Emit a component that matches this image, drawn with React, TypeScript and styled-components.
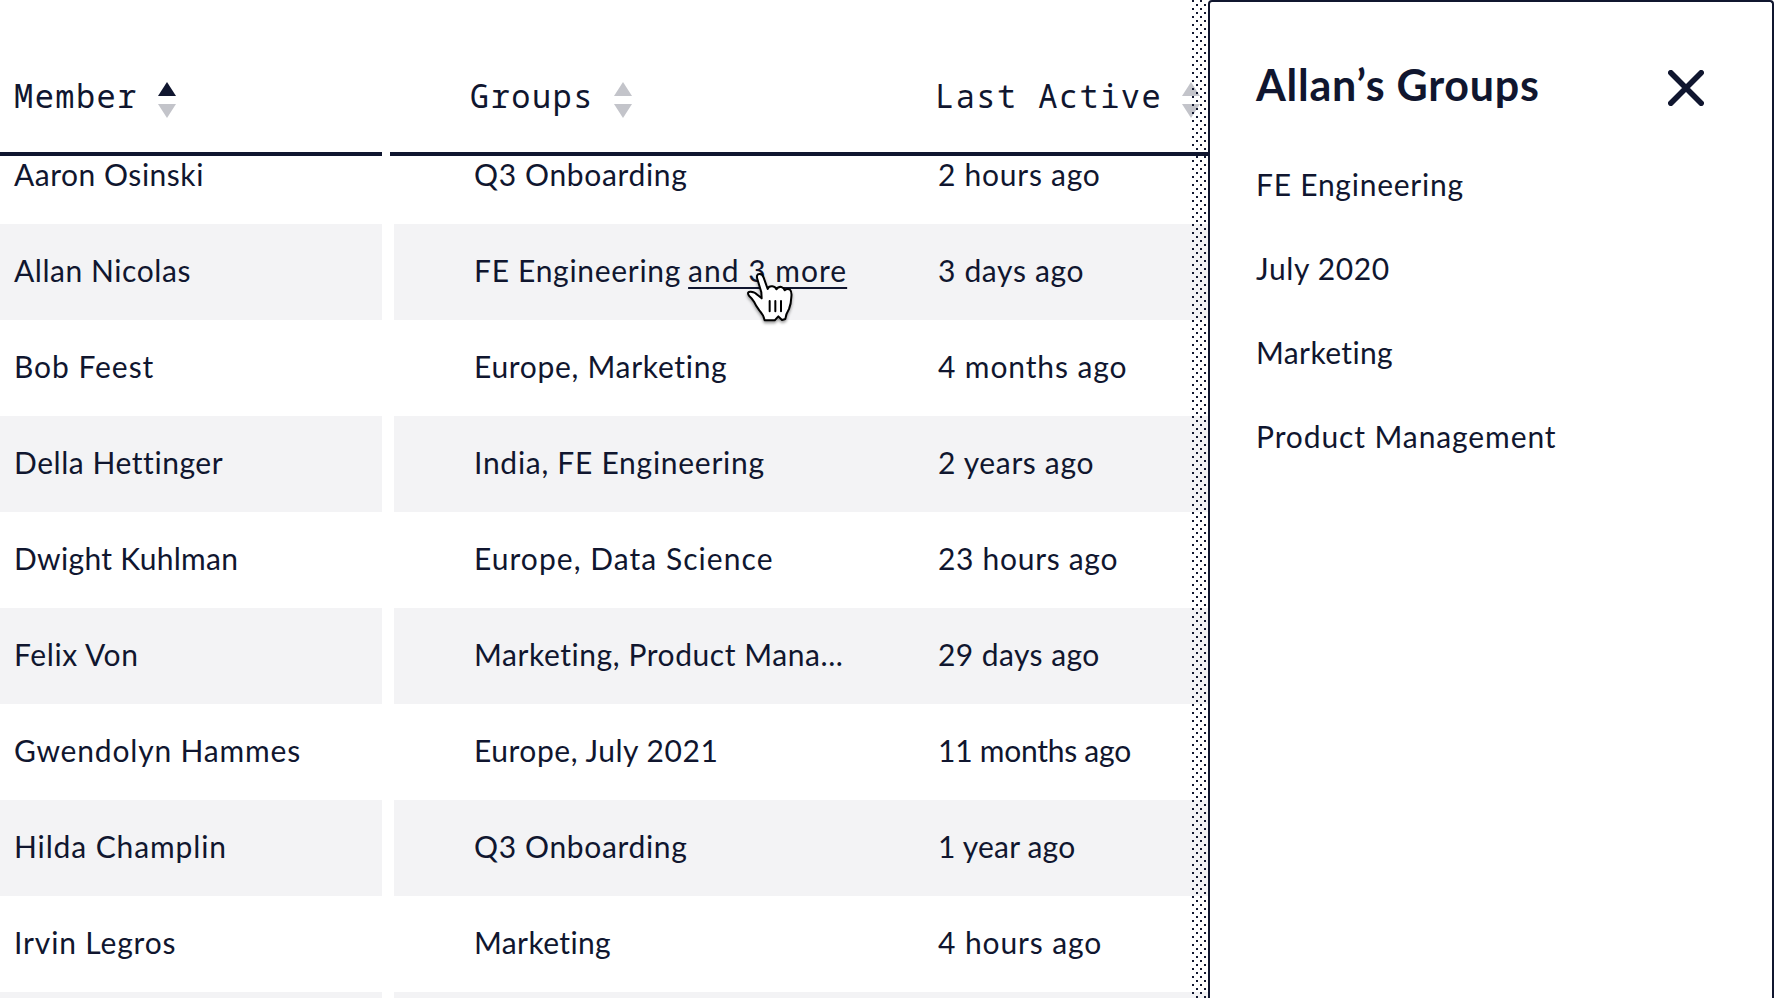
import React from 'react';
import styled, {createGlobalStyle} from 'styled-components';

const navy = '#10162f';
const muted = '#c3c4ca';
const stripe = '#f3f3f5';

const GlobalStyle = createGlobalStyle`
    * {
        box-sizing: border-box;
    }

    body {
        margin: 0;
        background: #fff;
        color: ${navy};
        font-family: Lato, 'Liberation Sans', sans-serif;
        font-size: 30px;
        overflow: hidden;
    }
`;

const Page = styled.div`
    display: flex;
    width: 100vw;
    height: 100vh;
    overflow: hidden;
`;

const TableArea = styled.main`
    position: relative;
    display: flex;
    flex-direction: column;
    flex: 0 0 1208px;
    overflow: hidden;
`;

const HeaderRow = styled.div`
    display: grid;
    grid-template-columns: 382px 818px;
    column-gap: 8px;
    flex: 0 0 156px;
`;

const HeaderGroup = styled.div<{ $columns?: string; $indent: number }>`
    display: grid;
    grid-template-columns: ${({ $columns }) => $columns || '1fr'};
    align-items: start;
    padding: 75px 0 0 ${({ $indent }) => $indent}px;
    border-bottom: 4px solid ${navy};
`;

const HeaderButton = styled.button`
    display: flex;
    align-items: flex-start;
    padding: 0;
    border: 0;
    background: none;
    color: inherit;
    font: 32px/42px 'Noto Sans Mono', 'Roboto Mono', 'Liberation Mono', monospace;
    letter-spacing: 1.45px;
    white-space: nowrap;
    cursor: pointer;
`;

const SortArrows = styled.svg`
    flex: none;
    width: 18px;
    height: 36px;
    margin: 7px 0 0 20px;
`;

const Body = styled.div`
    flex: 1;
    overflow: hidden;
`;

// rows are scrolled a little way under the header
const Rows = styled.div`
    margin-top: -28px;
`;

const Row = styled.div`
    display: grid;
    grid-template-columns: 382px 814px;
    column-gap: 12px;
    height: 96px;
`;

const CellGroup = styled.div<{ $striped: boolean; $columns?: string; $indent: number }>`
    display: grid;
    grid-template-columns: ${({ $columns }) => $columns || '1fr'};
    padding: 0 0 3px ${({ $indent }) => $indent}px;
    background: ${({ $striped }) => ($striped ? stripe : '#fff')};
    line-height: 93px;
    white-space: nowrap;
`;

const Label = styled.span<{ $tracking: number }>`
    letter-spacing: ${({ $tracking }) => $tracking}px;
`;

const MoreLink = styled.a`
    margin-left: 7px;
    letter-spacing: 1px;
    text-decoration: underline 2px;
    text-decoration-skip-ink: none;
    text-underline-offset: 5px;
    cursor: pointer;
`;

const DotShadow = styled.div`
    position: absolute;
    top: 0;
    right: 0;
    bottom: 0;
    width: 16px;
    background-image:
        conic-gradient(from 270deg at 2px 2px, ${navy} 90deg, transparent 0),
        conic-gradient(from 270deg at 2px 2px, ${navy} 90deg, transparent 0);
    background-size: 8px 8px;
    background-position: 0 0, 4px 4px;
`;

const Flyout = styled.aside`
    flex: 1;
    padding: 60px 68px 0 46px;
    border: 2px solid ${navy};
    border-bottom: 0;
    border-radius: 4px 4px 0 0;
    background: #fff;
`;

const FlyoutHeader = styled.header`
    display: flex;
    justify-content: space-between;
    align-items: flex-start;
    height: 82px;
`;

const Title = styled.h2`
    margin: 0;
    font-size: 43px;
    line-height: 46px;
    letter-spacing: 0.75px;
`;

const CloseButton = styled.button`
    display: flex;
    margin: 8px 0 0;
    padding: 0;
    border: 0;
    background: none;
    color: inherit;
    cursor: pointer;
`;

const GroupList = styled.ul`
    margin: 0;
    padding: 0;
    list-style: none;
`;

const GroupItem = styled.li`
    height: 84px;
    line-height: 80px;
`;

const Pointer = styled.svg`
    position: absolute;
    left: 744px;
    top: 269px;
    width: 52px;
    height: 56px;
    filter: drop-shadow(0 2px 1.5px rgba(0, 0, 0, 0.4));
    pointer-events: none;
`;

interface IText {
    text: string;
    tracking: number;
}

interface IMember {
    name: IText;
    groups: IText;
    more?: string;
    lastActive: IText;
}

const t = (text: string, tracking: number): IText => ({ text, tracking });

const members: IMember[] = [
    { name: t('Aaron Osinski', 0.52), groups: t('Q3 Onboarding', 0.65), lastActive: t('2 hours ago', 0.75) },
    { name: t('Allan Nicolas', 0.56), groups: t('FE Engineering', 0.7), more: 'and 3 more', lastActive: t('3 days ago', 0.66) },
    { name: t('Bob Feest', 0.95), groups: t('Europe, Marketing', 0.7), lastActive: t('4 months ago', 0.88) },
    { name: t('Della Hettinger', 0.55), groups: t('India, FE Engineering', 0.72), lastActive: t('2 years ago', 0.65) },
    { name: t('Dwight Kuhlman', 0.3), groups: t('Europe, Data Science', 1.05), lastActive: t('23 hours ago', 0.7) },
    { name: t('Felix Von', 0.6), groups: t('Marketing, Product Mana...', 0.57), lastActive: t('29 days ago', 0.43) },
    { name: t('Gwendolyn Hammes', 0.82), groups: t('Europe, July 2021', 0.55), lastActive: t('11 months ago', -0.25) },
    { name: t('Hilda Champlin', 0.88), groups: t('Q3 Onboarding', 0.65), lastActive: t('1 year ago', 0.2) },
    { name: t('Irvin Legros', 0.85), groups: t('Marketing', 0.38), lastActive: t('4 hours ago', 0.9) },
    { name: t('', 0), groups: t('', 0), lastActive: t('', 0) },
];

const allanGroups: IText[] = [
    t('FE Engineering', 0.75),
    t('July 2020', 0.65),
    t('Marketing', 0.38),
    t('Product Management', 0.9),
];

const SortHeader: React.FC<{ label: string; ascending?: boolean }> = ({ label, ascending }) => (
    <HeaderButton>
        {label}
        <SortArrows viewBox="0 0 18 36">
            <path d="M9 0L18 14H0Z" fill={ascending ? navy : muted}/>
            <path d="M0 22H18L9 36Z" fill={muted}/>
        </SortArrows>
    </HeaderButton>
);

const App: React.FC = () => (
    <Page>
        <GlobalStyle/>
        <TableArea>
            <DotShadow/>
            <HeaderRow>
                <HeaderGroup $indent={14}>
                    <SortHeader label="Member" ascending/>
                </HeaderGroup>
                <HeaderGroup $indent={80} $columns="465px 1fr">
                    <SortHeader label="Groups"/>
                    <SortHeader label="Last Active"/>
                </HeaderGroup>
            </HeaderRow>
            <Body>
                <Rows>
                    {
                        members.map(({ name, groups, more, lastActive }, index) => (
                            <Row key={index}>
                                <CellGroup $striped={index % 2 === 1} $indent={14}>
                                    <Label $tracking={name.tracking}>{name.text}</Label>
                                </CellGroup>
                                <CellGroup $striped={index % 2 === 1} $indent={80} $columns="464px 1fr">
                                    <span>
                                        <Label $tracking={groups.tracking}>{groups.text}</Label>
                                        {more && <MoreLink>{more}</MoreLink>}
                                    </span>
                                    <Label $tracking={lastActive.tracking}>{lastActive.text}</Label>
                                </CellGroup>
                            </Row>
                        ))
                    }
                </Rows>
            </Body>
            <Pointer viewBox="0 0 156 168">
                <g transform="translate(-42 -30)" stroke="#000" strokeWidth="6" strokeLinecap="round" strokeLinejoin="round">
                    <path
                        fill="#fff"
                        d="M95 118L94 100L82 60Q78 46 88 45Q97 44 101 56L113 90Q116 81 127 82Q137 83 139 91Q145 82 154 84Q162 86 164 94Q172 87 180 92Q186 98 184 114Q183 136 177 150Q168 164 166 180L156 183L145 172L134 184L104 184Q101 168 88 154Q76 138 72 128Q66 118 57 110Q50 99 60 98Q73 97 84 109Z"
                    />
                    <path fill="none" d="M119 126V157M136 126V157M153 126V157"/>
                </g>
            </Pointer>
        </TableArea>
        <Flyout>
            <FlyoutHeader>
                <Title>Allan’s Groups</Title>
                <CloseButton aria-label="Close">
                    <svg width="36" height="36" viewBox="0 0 36 36" stroke={navy} strokeWidth="5.6" strokeLinecap="round">
                        <path d="M2.8 2.8L33.2 33.2M33.2 2.8L2.8 33.2"/>
                    </svg>
                </CloseButton>
            </FlyoutHeader>
            <GroupList>
                {
                    allanGroups.map(({ text, tracking }) => (
                        <GroupItem key={text}>
                            <Label $tracking={tracking}>{text}</Label>
                        </GroupItem>
                    ))
                }
            </GroupList>
        </Flyout>
    </Page>
);

export default App;
